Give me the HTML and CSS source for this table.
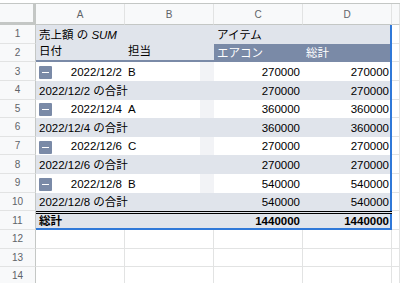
FILE: index.html
```html
<!DOCTYPE html>
<html lang="ja">
<head>
  <meta charset="utf-8">
  <title>ピボット テーブル</title>
  <link rel="stylesheet" href="styles.css">
</head>
<body>

  <div class="sheet">
    <div class="topline"></div>

    <!-- column letters -->
    <div class="row col-head">
      <div class="corner"></div>
      <div class="letter">A</div>
      <div class="letter">B</div>
      <div class="letter">C</div>
      <div class="letter">D</div>
      <div class="letter"></div>
    </div>

    <div class="row">
      <div class="num">1</div>
      <div class="cell head"><span>売上額 の <i>SUM</i></span></div>
      <div class="cell head"></div>
      <div class="cell head">アイテム</div>
      <div class="cell head edge"></div>
      <div class="cell blank"></div>
    </div>

    <div class="row">
      <div class="num">2</div>
      <div class="cell head under">日付</div>
      <div class="cell head under">担当</div>
      <div class="cell dark">エアコン</div>
      <div class="cell dark edge">総計</div>
      <div class="cell blank"></div>
    </div>

    <div class="row">
      <div class="num">3</div>
      <div class="cell date"><span class="toggle"></span><span>2022/12/2</span></div>
      <div class="cell who">B</div>
      <div class="cell val">270000</div>
      <div class="cell val edge">270000</div>
      <div class="cell blank"></div>
    </div>

    <div class="row">
      <div class="num">4</div>
      <div class="cell sub wide">2022/12/2 の合計</div>
      <div class="cell sub val">270000</div>
      <div class="cell sub val edge">270000</div>
      <div class="cell blank"></div>
    </div>

    <div class="row">
      <div class="num">5</div>
      <div class="cell date"><span class="toggle"></span><span>2022/12/4</span></div>
      <div class="cell who">A</div>
      <div class="cell val">360000</div>
      <div class="cell val edge">360000</div>
      <div class="cell blank"></div>
    </div>

    <div class="row">
      <div class="num">6</div>
      <div class="cell sub wide">2022/12/4 の合計</div>
      <div class="cell sub val">360000</div>
      <div class="cell sub val edge">360000</div>
      <div class="cell blank"></div>
    </div>

    <div class="row">
      <div class="num">7</div>
      <div class="cell date"><span class="toggle"></span><span>2022/12/6</span></div>
      <div class="cell who">C</div>
      <div class="cell val">270000</div>
      <div class="cell val edge">270000</div>
      <div class="cell blank"></div>
    </div>

    <div class="row">
      <div class="num">8</div>
      <div class="cell sub wide">2022/12/6 の合計</div>
      <div class="cell sub val">270000</div>
      <div class="cell sub val edge">270000</div>
      <div class="cell blank"></div>
    </div>

    <div class="row">
      <div class="num">9</div>
      <div class="cell date"><span class="toggle"></span><span>2022/12/8</span></div>
      <div class="cell who">B</div>
      <div class="cell val">540000</div>
      <div class="cell val edge">540000</div>
      <div class="cell blank"></div>
    </div>

    <div class="row">
      <div class="num">10</div>
      <div class="cell sub wide">2022/12/8 の合計</div>
      <div class="cell sub val">540000</div>
      <div class="cell sub val edge">540000</div>
      <div class="cell blank"></div>
    </div>

    <div class="row">
      <div class="num">11</div>
      <div class="cell total wide">総計</div>
      <div class="cell total val">1440000</div>
      <div class="cell total val edge">1440000</div>
      <div class="cell blank"></div>
    </div>

    <div class="row">
      <div class="num">12</div>
      <div class="cell blank"></div>
      <div class="cell blank"></div>
      <div class="cell blank"></div>
      <div class="cell blank"></div>
      <div class="cell blank"></div>
    </div>

    <div class="row">
      <div class="num">13</div>
      <div class="cell blank"></div>
      <div class="cell blank"></div>
      <div class="cell blank"></div>
      <div class="cell blank"></div>
      <div class="cell blank"></div>
    </div>

    <div class="row">
      <div class="num">14</div>
      <div class="cell blank"></div>
      <div class="cell blank"></div>
      <div class="cell blank"></div>
      <div class="cell blank"></div>
      <div class="cell blank"></div>
    </div>
  </div>

</body>
</html>
```

FILE: styles.css
```css
:root {
  --grid: #e2e3e3;
  --frame: #c4c7c5;
  --head-bg: #f8f9fa;
  --head-text: #5f6368;
  --pivot-light: #e0e4eb;
  --pivot-dark: #7a8aa7;
  --select: #2f78d8;
}

* {
  box-sizing: border-box;
}

body {
  margin: 0;
  background: #fff;
  color: #000;
  font-family: "Liberation Sans", "Noto Sans CJK JP", sans-serif;
  font-size: 11.5px;
  overflow: hidden;
}

.topline {
  height: 4px;
  border-bottom: 1px solid var(--frame);
}

.row {
  display: grid;
  grid-template-columns: 36px 89px 89px 89px 89px 8px;
  height: 18.64px;
}

.col-head {
  height: 21px;
}

.corner {
  background: var(--head-bg);
  border-right: 3px solid var(--frame);
  border-bottom: 3px solid var(--frame);
}

.letter {
  display: flex;
  align-items: center;
  justify-content: center;
  background: var(--head-bg);
  border-right: 1px solid var(--grid);
  border-bottom: 1px solid var(--frame);
  color: var(--head-text);
  font-size: 10px;
}

.num {
  display: flex;
  align-items: center;
  justify-content: center;
  background: var(--head-bg);
  border-right: 1px solid var(--frame);
  border-bottom: 1px solid var(--grid);
  color: var(--head-text);
  font-size: 10px;
}

.cell {
  display: flex;
  align-items: flex-end;
  padding: 0 3px 2px;
  line-height: 13px;
  white-space: nowrap;
  overflow: hidden;
}

.blank {
  border-right: 1px solid var(--grid);
  border-bottom: 1px solid var(--grid);
}

.head,
.sub,
.total {
  background: var(--pivot-light);
}

.head.under {
  border-bottom: 2px solid var(--pivot-dark);
}

.dark {
  background: var(--pivot-dark);
  color: #fff;
}

.wide {
  grid-column: span 2;
}

.val {
  justify-content: flex-end;
}

.date {
  justify-content: space-between;
  align-items: center;
  padding-top: 2px;
}

.date span:last-child {
  align-self: flex-end;
}

.who {
  background: linear-gradient(to right, #fff 75px, #f2f3f6 75px);
}

/* collapse button beside each date group */
.toggle {
  position: relative;
  width: 13px;
  height: 13px;
  border-radius: 1px;
  background: var(--pivot-dark);
  margin-top: 2px;
}

.toggle::after {
  content: "";
  position: absolute;
  left: 3px;
  right: 3px;
  top: 6px;
  height: 1px;
  background: #fff;
}

.total {
  border-top: 3px double #000;
  font-weight: bold;
  box-shadow: inset 0 -2px var(--select);
}

.edge {
  box-shadow: inset -2px 0 var(--select);
}

.total.edge {
  box-shadow: inset -2px 0 var(--select), inset 0 -2px var(--select);
}
```
